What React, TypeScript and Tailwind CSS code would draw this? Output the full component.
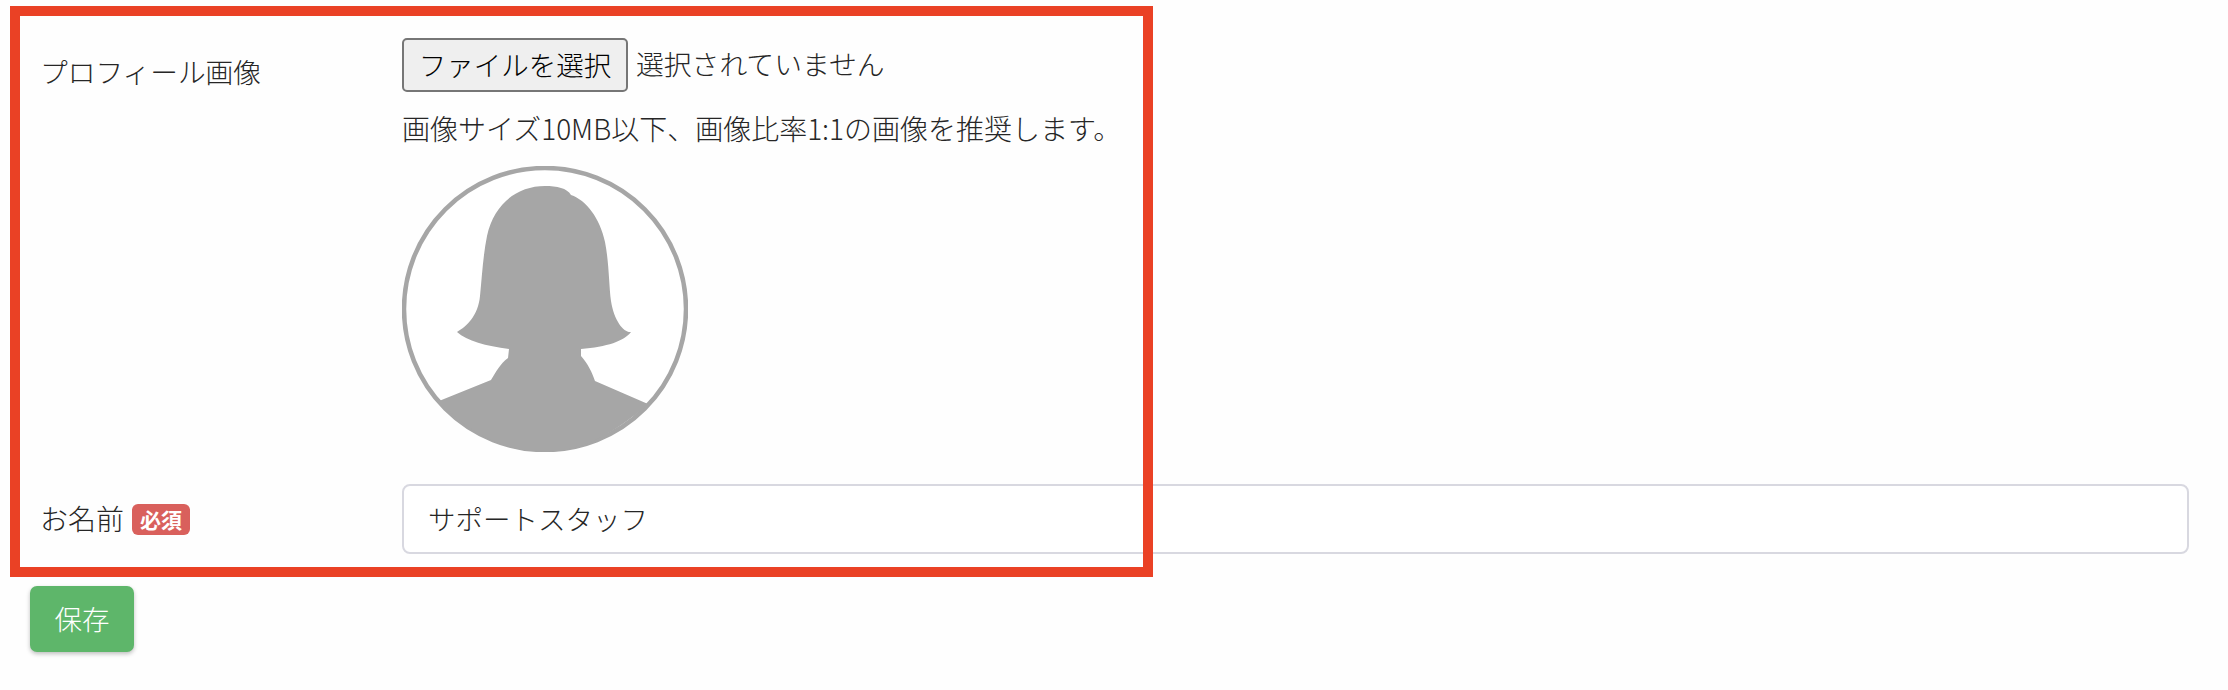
import { useState } from 'react';

// Silhouette drawn on a 286 box, matches the default avatar
function DefaultAvatar() {
  return (
    <svg viewBox="0 0 286 286" className="block w-[286px] h-[286px]">
      <defs>
        <clipPath id="avatar-clip">
          <circle cx="143" cy="143" r="143" />
        </clipPath>
      </defs>
      <circle cx="143" cy="143" r="141" fill="#fff" stroke="#a6a6a6" strokeWidth="4.5" />
      <path
        clipPath="url(#avatar-clip)"
        fill="#a6a6a6"
        d="M143 20C155 20 165 22 169 29C184 34 198 52 203 76C207 96 207 120 209 135C212 155 222 167 229 166C222 175 205 181 179 183L179 190C186 198 190 206 193 215L246 238C210 270 175 286 143 286C105 286 70 270 37 235L89 214C94 206 98 198 106 192L107 183C84 180 65 175 55 166C65 160 76 150 78 130C80 110 81 90 85 70C92 38 115 20 143 20Z"
      />
    </svg>
  );
}

export default function App() {
  const [name, setName] = useState('サポートスタッフ');

  return (
    <div className="relative w-[2228px] h-[690px] overflow-hidden bg-[#fefefe] text-[#262626] text-[28px] font-light font-['Noto_Sans_CJK_JP','Liberation_Sans',sans-serif]">
      {/* Form */}
      <div className="pl-[40px] pr-[39px] pt-[38px]">
        <div className="flex">
          <label className="w-[362px] shrink-0 pt-[13px] leading-[40px] text-[27.7px]">プロフィール画像</label>
          <div className="flex flex-col items-start">
            <div className="flex items-center">
              <button className="w-[226px] h-[54px] rounded-[5px] border-2 border-[#767676] bg-[#efefef] text-[#000] text-[27.5px] leading-none">
                ファイルを選択
              </button>
              <span className="ml-[8px] -mt-[2px] text-[27.8px]">選択されていません</span>
            </div>
            <p className="mt-[16px] leading-[40px]">画像サイズ10MB以下、画像比率1:1の画像を推奨します。</p>
            <div className="mt-[18px]">
              <DefaultAvatar />
            </div>
          </div>
        </div>

        <div className="flex items-center mt-[32px]">
          <div className="w-[362px] shrink-0 flex items-center">
            <span className="-mt-[2px]">お名前</span>
            <span className="ml-[8px] w-[58px] h-[31px] rounded-[6px] bg-[#d9605c] text-white text-[21px] font-bold leading-[31px] text-center">
              必須
            </span>
          </div>
          <input
            value={name}
            onChange={(e) => setName(e.target.value)}
            className="flex-1 h-[70px] pl-[24px] pr-[24px] pb-[2px] rounded-[8px] border-2 border-[#d8d8e0] bg-white text-[#262626] text-[27.5px] outline-none"
          />
        </div>

        <button className="block -ml-[10px] mt-[32px] w-[104px] h-[66px] rounded-[7px] bg-[#5eb66a] text-white text-[27.5px] shadow-[0_2px_4px_rgba(0,0,0,0.25)]">
          保存
        </button>
      </div>

      {/* Red annotation frame */}
      <div className="absolute left-[10px] top-[6px] w-[1143px] h-[571px] border-[10px] border-[#ea4125] pointer-events-none" />
    </div>
  );
}
